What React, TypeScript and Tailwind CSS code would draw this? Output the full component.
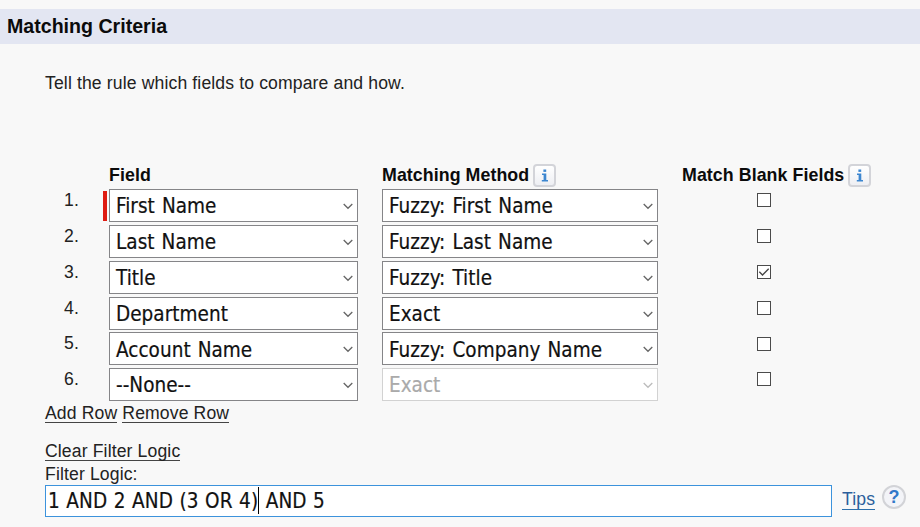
import React from "react";

const rows = [
  { field: "First Name", method: "Fuzzy: First Name", required: true },
  { field: "Last Name", method: "Fuzzy: Last Name" },
  { field: "Title", method: "Fuzzy: Title", checked: true },
  { field: "Department", method: "Exact" },
  { field: "Account Name", method: "Fuzzy: Company Name" },
  { field: "--None--", method: "Exact", disabled: true },
];

function SelectBox({ value, disabled = false }: { value: string; disabled?: boolean }) {
  return (
    <div
      className={`flex h-[33px] w-full items-center justify-between border bg-white pt-[2px] pl-[6px] pr-1 font-['DejaVu_Sans_Condensed','DejaVu_Sans',sans-serif] text-[20.5px] leading-none tracking-[0.03px] [word-spacing:1.2px] [-webkit-text-stroke:0.2px] ${
        disabled ? "border-[#d2d2d2] text-[#aaaaaa]" : "border-[#858588] text-[#111]"
      }`}
    >
      <span className="whitespace-pre">{value}</span>
      <svg width="10" height="7" viewBox="0 0 10 7" fill="none" className={disabled ? "text-[#bcbcbc]" : "text-[#666]"}>
        <path d="M.7 1 5 5.3 9.3 1" stroke="currentColor" strokeWidth="1.3" />
      </svg>
    </div>
  );
}

function InfoButton() {
  return (
    <span className="mt-px flex h-[23px] w-[23px] items-center justify-center rounded-[4px] border-2 border-[#d3d4d9] bg-linear-to-b from-white to-[#eeeff3]">
      <svg width="8" height="13" viewBox="0 0 8 13" fill="#3c86d0">
        <rect x="2.4" y="0.5" width="2.8" height="2.4" />
        <path d="M1 4.5H5.3V11H7V12.4H.8V11H2.6V6H1Z" />
      </svg>
    </span>
  );
}

function Checkbox({ checked = false }: { checked?: boolean }) {
  return (
    <span className="mt-[4.2px] flex h-[14px] w-[14px] items-center justify-center border border-[#4b4b4b] bg-white">
      {checked && (
        <svg width="12" height="12" viewBox="0 0 12 12" fill="none">
          <path d="M1.3 5.8 4.5 9 10.7 2.8" stroke="#444" strokeWidth="1.3" />
        </svg>
      )}
    </span>
  );
}

const link = "border-b-[1.5px] border-[#444] leading-[17px]";

export default function App() {
  return (
    <div className="h-[527px] w-[920px] overflow-hidden bg-[#f8f8f8] pt-[9px] font-['Liberation_Sans',Arial,sans-serif] text-[17.6px] tracking-[0.13px] text-[#222]">
      <header className="flex h-[35px] items-center bg-[#e3e6f2] pl-[7px]">
        <h1 className="text-[19.6px] leading-none font-bold tracking-normal text-[#0b0b0b]">Matching Criteria</h1>
      </header>
      <p className="mt-7 ml-[45px] leading-[22px]">Tell the rule which fields to compare and how.</p>

      <div className="mt-[69px] ml-[45px] flex h-[26px] text-[17.8px] font-bold tracking-[0.07px] text-[#0b0b0b]">
        <div className="ml-[64px] w-[273px] leading-[24px]">Field</div>
        <div className="flex w-[300px] gap-[4px] leading-[24px]">
          <span>Matching Method</span>
          <InfoButton />
        </div>
        <div className="flex gap-[4px] leading-[24px]">
          <span>Match Blank Fields</span>
          <InfoButton />
        </div>
      </div>

      <div className="mt-[0.2px] ml-[45px]">
        {rows.map((row, i) => (
          <div key={i} className="flex h-[35.8px] items-start">
            <div className="w-[58px] pl-[19px] leading-[23px]">{i + 1}.</div>
            <div className="flex h-[33px] w-[6px] items-center">
              {row.required && <span className="h-[30px] w-[4px] bg-[#df1b12]" />}
            </div>
            <div className="w-[248.5px]">
              <SelectBox value={row.field} />
            </div>
            <div className="ml-[24.5px] w-[276px]">
              <SelectBox value={row.method} disabled={row.disabled} />
            </div>
            <div className="ml-[99px]">
              <Checkbox checked={row.checked} />
            </div>
          </div>
        ))}
      </div>

      <div className="ml-[45px]">
        <div className="mt-[1px] flex h-[38px] items-start gap-[5px]">
          <a className={link}>Add Row</a>
          <a className={link}>Remove Row</a>
        </div>
        <div className="flex h-[21px] items-start">
          <a className={link}>Clear Filter Logic</a>
        </div>
        <div className="h-[21px] leading-[20px]">Filter Logic:</div>
        <div className="flex items-start">
          <div className="flex h-[32px] w-[787px] items-center border-[1.5px] border-[#3c93dc] bg-white pl-[2px] font-['DejaVu_Sans_Condensed','DejaVu_Sans',sans-serif] text-[20.5px] leading-none tracking-[0.08px] whitespace-pre text-[#111] [word-spacing:0.6px] [-webkit-text-stroke:0.2px]">
            <span>1 AND 2 AND (3 OR 4)</span>
            <span className="h-[27px] w-px bg-black" />
            <span> AND 5</span>
          </div>
          <a className="mt-[5px] ml-[10px] border-b-[1.5px] border-[#2c6fab] leading-[19px] text-[#2c5f9c]">Tips</a>
          <span className="ml-[7px] flex h-6 w-6 items-center justify-center rounded-full border-2 border-[#d2d3d7] bg-[#f3f4f8] text-[18px] leading-none font-bold tracking-normal text-[#3178c8]">
            ?
          </span>
        </div>
      </div>
    </div>
  );
}
